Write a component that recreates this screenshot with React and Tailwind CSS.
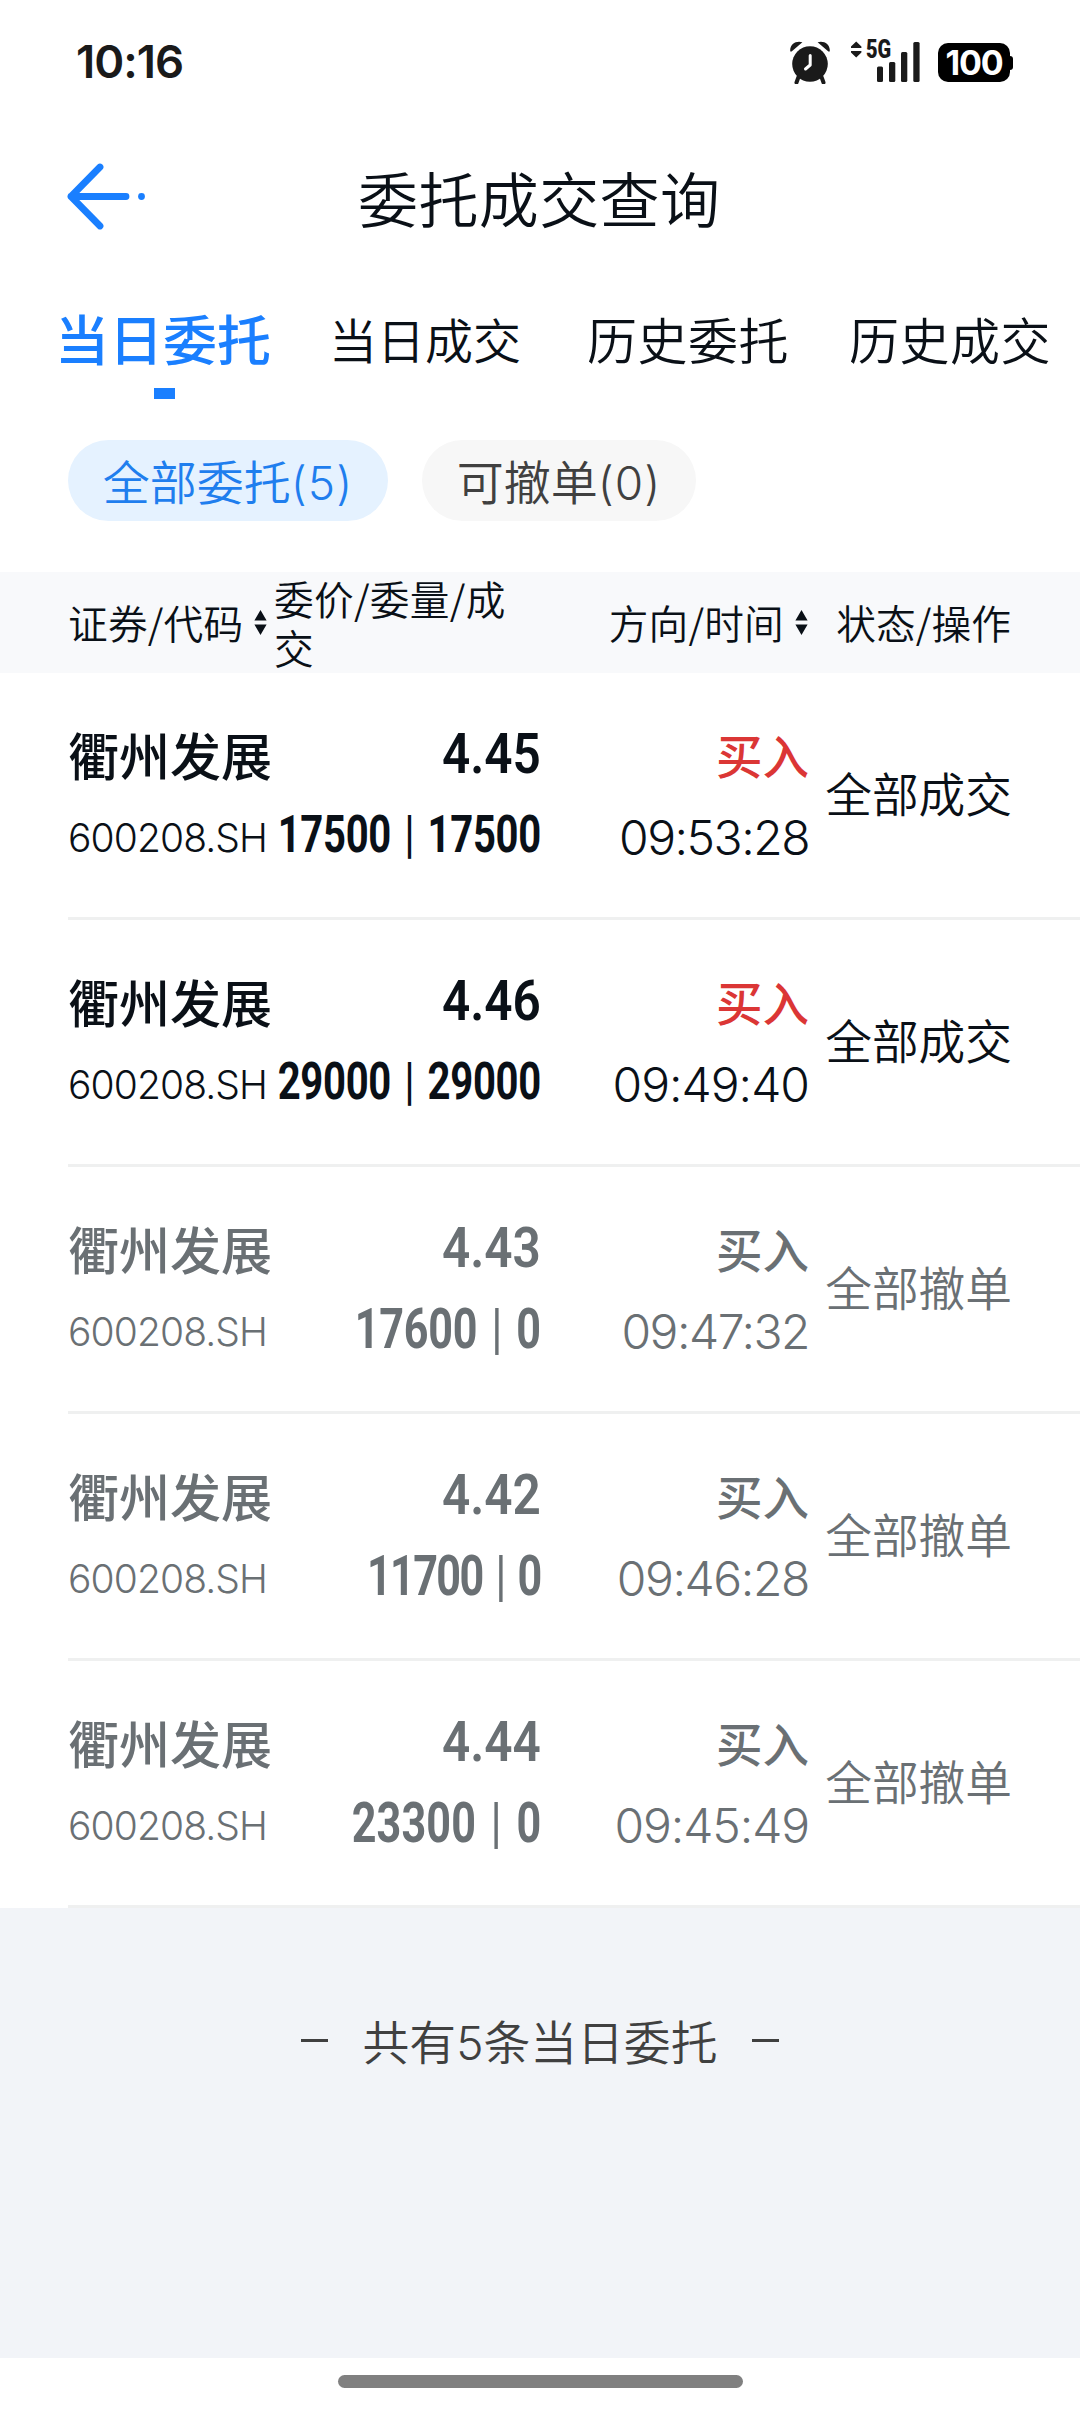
const CJK = "font-['Noto_Sans_CJK_SC',sans-serif]";

const tabs = [
  { label: "当日委托", cls: "ml-[55px] w-[218px] text-[54px] font-medium text-[#1a7fff]" },
  { label: "当日成交", cls: "ml-[56px] w-[193px] text-[48px] text-[#0a1017]" },
  { label: "历史委托", cls: "ml-[65px] w-[202px] text-[50px] tracking-[0.5px] text-[#0a1017]" },
  { label: "历史成交", cls: "ml-[60px] w-[202px] text-[50px] tracking-[0.5px] text-[#0a1017]" },
];

const orders = [
  { price: "4.45", qty: "17500", done: "17500", time: "09:53:28", status: "全部成交", live: true, qtyCls: "text-[52px] tracking-[-0.4px]", timeCls: "tracking-[-1.5px]" },
  { price: "4.46", qty: "29000", done: "29000", time: "09:49:40", status: "全部成交", live: true, qtyCls: "text-[52px] tracking-[-0.4px]", timeCls: "tracking-[-1px]" },
  { price: "4.43", qty: "17600", done: "0", time: "09:47:32", status: "全部撤单", live: false, qtyCls: "text-[56px] tracking-[-0.3px]", timeCls: "tracking-[-1.5px]" },
  { price: "4.42", qty: "11700", done: "0", time: "09:46:28", status: "全部撤单", live: false, qtyCls: "text-[56px] tracking-[-2.1px]", timeCls: "tracking-[-1.4px]" },
  { price: "4.44", qty: "23300", done: "0", time: "09:45:49", status: "全部撤单", live: false, qtyCls: "text-[56px] tracking-[0.2px]", timeCls: "tracking-[-1.1px]" },
];

function SortIcon({ className }) {
  return (
    <svg className={className} width="13" height="25" viewBox="0 0 13 25" fill="#0a1017">
      <path d="M6.5 0 12.6 10.5H.4zM6.5 25 12.6 14.5H.4z" />
    </svg>
  );
}

function StatusBar() {
  return (
    <div className="flex h-[120px] items-start">
      <div className="ml-[76px] mt-[38px] w-[120px] whitespace-nowrap font-['Inter',sans-serif] text-[45.5px] font-semibold leading-[48px] tracking-[-1px] text-[#1a1a1a]">
        10:16
      </div>
      <svg className="ml-[594px] mt-[41px]" width="40" height="43" viewBox="0 0 40 43" fill="#1a1a1a">
        <path d="M.3 10.5C-.7 3.5 6 -1 12.4 1.2L1.6 10.6zM39.7 10.5C40.7 3.5 34 -1 27.6 1.2L38.4 10.6z" />
        <circle cx="20" cy="23" r="17.8" />
        <path d="M8.5 36 6.5 41.5M31.5 36 33.5 41.5" stroke="#1a1a1a" strokeWidth="4" strokeLinecap="round" />
        <path d="M20.2 14.5V24L15.5 28" stroke="#fff" strokeWidth="3" fill="none" strokeLinecap="round" strokeLinejoin="round" />
      </svg>
      <div className="relative ml-[21px] mt-[41px] h-[42px] w-[70px]">
        <svg width="70" height="42" viewBox="0 0 70 42" fill="#1a1a1a">
          <path d="M5.2.5 10.4 5.5V7H0V5.5zM5.2 16.5 10.4 11.5V10H0V11.5z" />
          <rect x="26" y="25.5" width="6" height="15.5" rx="1.5" />
          <rect x="38" y="21" width="6.3" height="20" rx="1.5" />
          <rect x="50" y="11" width="6.3" height="30" rx="1.5" />
          <rect x="62.3" y="1" width="6.3" height="40" rx="1.5" />
        </svg>
        <span className="absolute -top-px left-[15px] origin-left scale-x-[0.8] font-['Roboto',sans-serif] text-[25px] font-black leading-[20px] text-[#1a1a1a]">
          5G
        </span>
      </div>
      <div className="ml-[17px] mt-[43px] flex items-center">
        <div className="flex h-[39px] w-[72px] items-center justify-center rounded-[10px] bg-black font-['Inter',sans-serif] text-[34px] font-bold tracking-[-1.2px] text-white">
          100
        </div>
        <div className="h-[14px] w-[3px] rounded-r-[3px] bg-black" />
      </div>
    </div>
  );
}

function OrderRow({ order }) {
  const tone = order.live ? "text-[#0a1017]" : "text-[#6a7074]";
  return (
    <div className={`ml-[68px] flex h-[247px] border-b-[3px] border-[#eff0f0] whitespace-nowrap ${tone}`}>
      <div className="w-[208px] pt-[42px]">
        <div className="h-[82px] text-[51px] font-medium leading-[78px]">衢州发展</div>
        <div className="h-[82px] font-['Inter',sans-serif] text-[39px] font-[350] leading-[82px] tracking-[-0.9px]">600208.SH</div>
      </div>
      <div className="flex w-[265px] flex-col items-end pt-[40px] font-['Roboto',sans-serif] font-semibold">
        <div className="h-[82px] origin-right scale-x-[0.9] text-[55px] leading-[82px]">{order.price}</div>
        <div className={`h-[82px] origin-right scale-x-[0.77] leading-[80px] font-bold ${order.qtyCls}`}>
          {order.qty}<span className="mx-[5px] font-medium"> | </span>{order.done}
        </div>
      </div>
      <div className="flex w-[268px] flex-col items-end pt-[42px]">
        <div className={`h-[82px] text-[46.5px] leading-[78px] font-medium ${order.live ? "text-[#db3635]" : ""}`}>买入</div>
        <div className={`h-[82px] font-['Inter',sans-serif] text-[48px] font-[350] leading-[82px] ${order.timeCls}`}>{order.time}</div>
      </div>
      <div className="flex w-[203px] items-center justify-end pb-[5px] font-[350] text-[46.7px]">{order.status}</div>
    </div>
  );
}

export default function App() {
  return (
    <div className={`flex h-[2412px] w-[1080px] flex-col overflow-hidden bg-white font-[350] text-[#0a1017] ${CJK}`}>
      <StatusBar />
      <header className="flex h-[153px] items-center">
        <svg className="ml-[66px]" width="80" height="68" viewBox="0 0 80 68">
          <path d="M34 4 5 33.5 34 63M5 33.5H60" fill="none" stroke="#1a7fff" strokeWidth="6.8" strokeLinecap="round" strokeLinejoin="round" />
          <circle cx="75.5" cy="33.5" r="3.4" fill="#1a7fff" />
        </svg>
        <h1 className="ml-[212px] whitespace-nowrap text-[60px] leading-[60px] font-[350] tracking-[0.4px]">委托成交查询</h1>
      </header>
      <nav className="flex h-[115px] items-start whitespace-nowrap pt-[27px]">
        {tabs.map((t) => (
          <div key={t.label} className={`leading-[76px] ${t.cls}`}>{t.label}</div>
        ))}
      </nav>
      <div className="ml-[154px] h-[11px] w-[21px] bg-[#1a7fff]" />
      <div className="ml-[68px] mt-[41px] flex gap-[34px] whitespace-nowrap text-[47px] leading-[79px]">
        <div className="h-[81px] w-[320px] rounded-full bg-[#e5f2ff] text-center text-[#1f7eee]">
          全部委托<span className="font-['Inter',sans-serif] text-[46px] tracking-[1px]">(5)</span>
        </div>
        <div className="h-[81px] w-[274px] rounded-full bg-[#f7f7f7] text-center text-[#404040]">
          可撤单<span className="font-['Inter',sans-serif] text-[46px] tracking-[1px]">(0)</span>
        </div>
      </div>
      <div className="mt-[51px] flex h-[101px] items-center bg-[#f8f9fb] pl-[68px] text-[39.7px] leading-[48.5px] whitespace-nowrap">
        <div className="flex w-[206px] items-center tracking-[0.2px]">
          证券/代码
          <SortIcon className="ml-[11px] shrink-0" />
        </div>
        <div className="w-[266px]">
          <div className="w-[240px] break-all whitespace-normal tracking-[0.3px]">委价/委量/成交</div>
        </div>
        <div className="flex w-[268px] items-center justify-end tracking-[0.2px]">
          方向/时间
          <SortIcon className="ml-[11px] shrink-0" />
        </div>
        <div className="w-[203px] text-right tracking-[0.1px]">状态/操作</div>
      </div>
      <div className="bg-white">
        {orders.map((o) => (
          <OrderRow key={o.time} order={o} />
        ))}
      </div>
      <div className="flex h-[450px] items-start justify-center gap-[35px] bg-[#f2f4f8] pt-[99px] text-[46.8px] leading-[66px] text-[#404040]">
        <div className="mt-[32px] h-[3px] w-[27px] bg-[#404040]" />
        <div>共有<span className="font-['Inter',sans-serif] text-[46px]">5</span>条当日委托</div>
        <div className="mt-[32px] h-[3px] w-[27px] bg-[#404040]" />
      </div>
      <div className="flex h-[54px] justify-center pt-[17px]">
        <div className="h-[13px] w-[405px] rounded-full bg-[#808080]" />
      </div>
    </div>
  );
}
